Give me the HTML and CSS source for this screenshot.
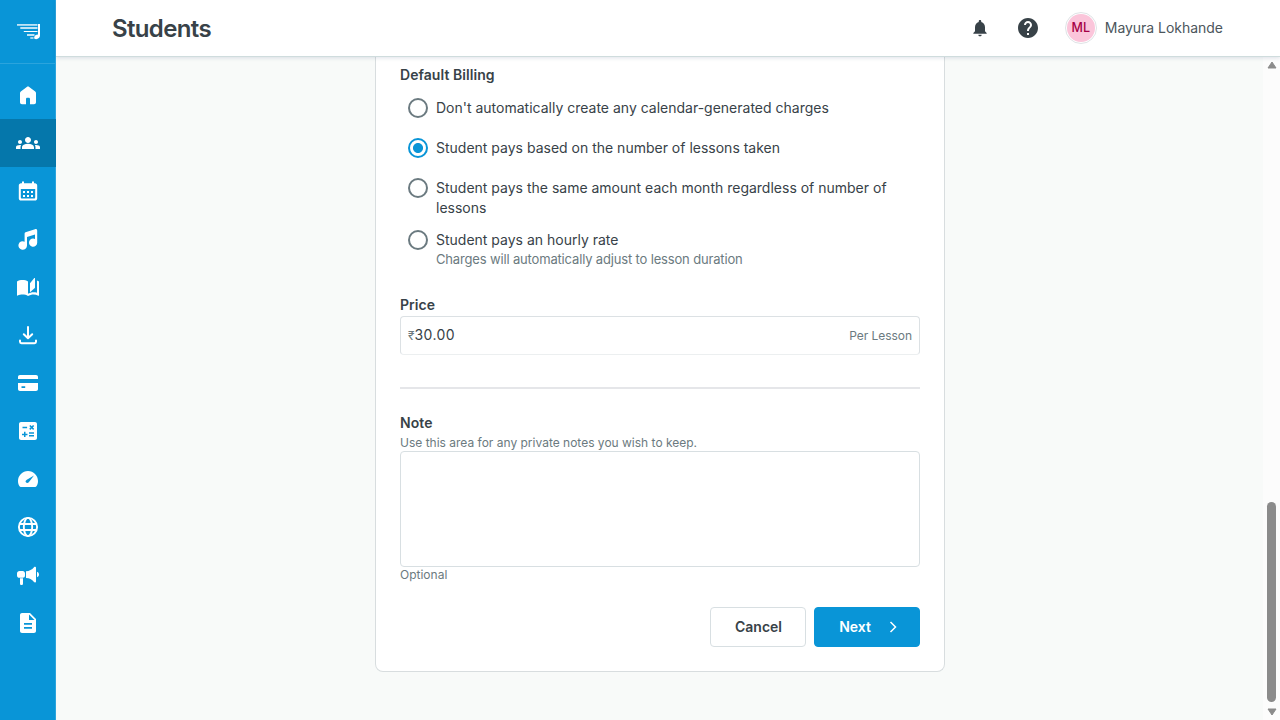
FILE: index.html
```html
<!DOCTYPE html>
<html lang="en">
<head>
<meta charset="utf-8">
<title>Students</title>
<link rel="stylesheet" href="styles.css">
</head>
<body>
<div class="app">
  <nav class="sidebar">
    <a class="logo" aria-label="Home page">
      <svg width="24" height="18" viewBox="0 0 24 18">
        <g fill="#bfe3f5"><rect x="0" y="1" width="20.500" height="1.800"/><rect x="3.300" y="4" width="17.200" height="2"/><rect x="6.800" y="8" width="13.700" height="1" fill="#fff"/><rect x="10" y="11" width="7.500" height="2"/><rect x="13.300" y="14.200" width="3.200" height="1.600"/></g>
        <path d="M21 1h2v11.600c0 2-1.700 3.600-3.800 3.600-1.600 0-2.300-.8-2-2 .3-1.400 1.700-2.400 3.800-2.600z" fill="#fff"/>
      </svg>
    </a>
    <div class="links">
      <a class="link"><svg class="icon" viewBox="0 0 24 24"><path d="M6 21.200c-1.200 0-2-.8-2-2V10.100c0-.7.3-1.200.8-1.600l6-4.600c.7-.6 1.700-.6 2.400 0l6 4.600c.5.400.8.900.8 1.600v9.100c0 1.200-.8 2-2 2h-4v-5c0-.9-.6-1.400-1.400-1.400h-1.200c-.8 0-1.400.5-1.400 1.400v5z"/></svg></a>
      <a class="link active"><svg class="icon" viewBox="0 0 24 24"><path d="M12 12.750c1.630 0 3.070.39 4.240.9 1.080.48 1.760 1.560 1.760 2.730V18H6v-1.610c0-1.180.68-2.260 1.760-2.730 1.170-.52 2.610-.91 4.240-.91zM4 13c1.100 0 2-.9 2-2s-.9-2-2-2-2 .9-2 2 .9 2 2 2zm1.130 1.100c-.37-.06-.74-.1-1.130-.1-.99 0-1.930.21-2.780.58C.48 14.900 0 15.620 0 16.430V18h4.500v-1.610c0-.83.23-1.610.63-2.290zM20 13c1.100 0 2-.9 2-2s-.9-2-2-2-2 .9-2 2 .9 2 2 2zm4 3.430c0-.81-.48-1.530-1.220-1.850-.85-.37-1.790-.58-2.780-.58-.39 0-.76.040-1.130.1.400.68.630 1.460.630 2.290V18H24zM12 6c1.660 0 3 1.340 3 3s-1.340 3-3 3-3-1.340-3-3 1.340-3 3-3z"/></svg></a>
      <a class="link"><svg class="icon" viewBox="0 0 24 24"><path fill-rule="evenodd" d="M6 2.500h2v1.700h8V2.500h2v1.700h1c1.200 0 2.200 1 2.200 2.200v13c0 1.200-1 2.200-2.200 2.200H5c-1.200 0-2.200-1-2.200-2.200v-13c0-1.200 1-2.200 2.200-2.200h1zM4.800 10v8.300c0 .8.400 1.200 1.200 1.200h12c.8 0 1.200-.4 1.200-1.200V10zM7 12h2v2H7zm4 0h2v2h-2zm4 0h2v2h-2zM7 16h2v2H7zm4 0h2v2h-2zm4 0h2v2h-2z"/></svg></a>
      <a class="link"><svg class="icon" viewBox="0 0 24 24"><path d="M9.500 5.200 19 2.200c1.300-.4 2.200.3 2.200 1.500v12a4.100 4.100 0 1 1-2.200-3.700V7.600L11 10v8.500a4.300 4.300 0 1 1-2.400-3.800V6.400c0-.6.300-1 .9-1.200z"/></svg></a>
      <a class="link"><svg class="icon" viewBox="0 0 24 24"><path d="m14 8.200 4.300-5.100c.3-.4.7-.2.700.2v8.900c0 .5-.2.800-.5 1.100L14 17.200zM6.500 5C4.500 5 2.500 5.400 1 6.500v13.700c0 .3.300.5.500.5C3 19.900 5 19.600 6.500 19.600c2 0 4 .4 5.500 1.500 1.400-.9 3.900-1.500 5.500-1.500 1.700 0 3.300.3 4.800 1.100.3.100.7-.1.700-.5V6.500c-.6-.5-1.200-.8-2-1v12.300c-1.100-.4-2.300-.5-3.500-.5-1.700 0-4.200.7-5.500 1.500V6.500C10.500 5.400 8.500 5 6.500 5z"/></svg></a>
      <a class="link"><svg class="icon stroke" viewBox="0 0 24 24"><path d="M12 4V14.500M7.800 11.200 12 15.200l4.200-4M4 17.500v1.300c0 1.100.8 1.400 1.500 1.400h13c.8 0 1.500-.3 1.500-1.400v-1.300"/></svg></a>
      <a class="link"><svg class="icon" viewBox="0 0 24 24"><path fill-rule="evenodd" d="M4 4h16c1.200 0 2 .8 2 2v2H2V6c0-1.200.8-2 2-2zM2 12h20v6c0 1.200-.8 2-2 2H4c-1.200 0-2-.8-2-2zm3.500 3.200v1.800h3.700v-1.800z"/></svg></a>
      <a class="link"><svg class="icon" viewBox="0 0 24 24"><path fill-rule="evenodd" d="M5 3h14c1.100 0 2 .9 2 2v14c0 1.100-.9 2-2 2H5c-1.100 0-2-.9-2-2V5c0-1.100.9-2 2-2zm1.500 4.700v1.500h4.600V7.700zm6.800-.8L14.700 8.400l-1.500 1.400 1.100 1.100 1.400-1.400 1.400 1.400 1.100-1.100-1.400-1.400 1.400-1.400-1.100-1.100-1.400 1.400-1.400-1.400zM13 13.300v1.500h5v-1.500zm0 2.700v1.500h5V16zm-5-3.200v1.900H6v1.500h2v1.900h1.500v-1.900h2v-1.500h-2v-1.900z"/></svg></a>
      <a class="link"><svg class="icon" viewBox="0 0 24 24"><path fill-rule="evenodd" d="M12 4c5.500 0 10 4.500 10 10 0 1.900-.5 3.600-1.400 5.100-.3.600-.8.900-1.500.9H4.900c-.7 0-1.200-.3-1.500-.9C2.500 17.600 2 15.900 2 14 2 8.500 6.500 4 12 4zm6 4.600-7.200 4.100c-1.300.8-1.500 1.800-.9 2.600.7.900 2 .9 2.900-.1z"/></svg></a>
      <a class="link"><svg class="icon outline" viewBox="0 0 24 24"><circle cx="12" cy="12" r="9.100"/><ellipse cx="12" cy="12" rx="4.200" ry="9.100"/><path d="M3.700 9h16.600M3.700 15h16.600"/></svg></a>
      <a class="link"><svg class="icon" viewBox="0 0 24 24"><path d="M3.500 8h3.200C8 8 9 9 9 10.500v2c0 1.300-.9 2.300-2.200 2.300H3.500c-1.500 0-2.500-.9-2.500-2.300v-2C1 9 2 8 3.500 8zM4 15.300h3v5.200c0 1-.6 1.600-1.500 1.600S4 21.500 4 20.500zM10 8.200c3.500-.2 5.900-1.500 8-4 .6-.7 2-.5 2 .6v13.600c0 1.100-1.400 1.400-2 .6-2.100-2.500-4.500-3.900-8-4zM21 8.700c1.300.5 2 1.500 2 2.800s-.7 2.300-2 2.800z"/></svg></a>
      <a class="link"><svg class="icon" viewBox="0 0 24 24"><path fill-rule="evenodd" d="M6 2h8l6 6v12c0 1.100-.9 2-2 2H6c-1.100 0-2-.9-2-2V4c0-1.100.9-2 2-2zm7 1.500V9h5.500zM8 12v1.700h8V12zm0 4v1.700h8V16z"/></svg></a>
    </div>
  </nav>
  <div class="page">
    <header class="header">
      <h1 class="title">Students</h1>
      <div class="tools">
        <svg class="bell" viewBox="0 0 24 24"><path d="M12 22c1.100 0 2-.9 2-2h-4c0 1.100.9 2 2 2zm6-6v-5c0-3.070-1.630-5.640-4.500-6.320V4c0-.83-.67-1.500-1.500-1.500s-1.500.67-1.500 1.500v.68C7.640 5.360 6 7.920 6 11v5l-2 2v1h16v-1z"/></svg>
        <svg class="help" viewBox="0 0 24 24"><path d="M12 2C6.480 2 2 6.480 2 12s4.480 10 10 10 10-4.480 10-10S17.520 2 12 2zm1 17h-2v-2h2zm2.070-7.750-.9.920C13.450 12.900 13 13.500 13 15h-2v-.5c0-1.100.45-2.100 1.170-2.830l1.240-1.260c.37-.36.59-.86.590-1.410 0-1.100-.9-2-2-2s-2 .9-2 2H8c0-2.210 1.790-4 4-4s4 1.790 4 4c0 .88-.36 1.680-.93 2.250z"/></svg>
        <div class="user"><span class="avatar">ML</span><span class="name">Mayura Lokhande</span></div>
      </div>
    </header>
    <div class="body">
      <main class="content">
        <form class="card">
          <div class="label">Default Billing</div>
          <div class="options">
            <label class="option"><span class="radio"></span><span>Don't automatically create any calendar-generated charges</span></label>
            <label class="option"><span class="radio checked"></span><span>Student pays based on the number of lessons taken</span></label>
            <label class="option multi"><span class="radio"></span><span>Student pays the same amount each month regardless of number of lessons</span></label>
            <label class="option"><span class="radio"></span><span>Student pays an hourly rate<small class="hint">Charges will automatically adjust to lesson duration</small></span></label>
          </div>
          <div class="label price-label">Price</div>
          <div class="price"><span class="currency">₹</span><span class="amount">30.00</span><span class="unit">Per Lesson</span></div>
          <hr class="rule">
          <div class="label">Note</div>
          <div class="help-text">Use this area for any private notes you wish to keep.</div>
          <div class="note"></div>
          <div class="help-text optional">Optional</div>
          <div class="actions">
            <button type="button" class="button">Cancel</button>
            <button type="button" class="button primary">Next<svg class="chevron" viewBox="0 0 8 12"><path d="m1.500 1 5 5-5 5"/></svg></button>
          </div>
        </form>
      </main>
      <div class="scrollbar">
        <svg width="10" height="8" viewBox="0 0 10 8"><path d="M5 1 9 7H1z"/></svg>
        <div class="thumb"></div>
        <svg width="10" height="8" viewBox="0 0 10 8"><path d="M5 7 9 1H1z"/></svg>
      </div>
    </div>
  </div>
</div>
</body>
</html>
```

FILE: styles.css
```css
* { box-sizing: border-box; }
body { margin: 0; font-family: Inter, "Liberation Sans", sans-serif; font-size: 14px; line-height: 20px; color: #384248; overflow: hidden; }
.app { display: flex; height: 720px; }
.sidebar { width: 56px; flex: none; background: #0995d7; border-right: 1px solid #2ba4dd; }
.logo { display: flex; height: 64px; padding: 23px 0 0 17px; border-bottom: 1px solid #2ba4dd; }
.links { padding-top: 7px; }
.link { display: flex; align-items: center; justify-content: center; height: 48px; width: 56px; }
.link.active { background: #0577ab; }
.icon { width: 24px; height: 24px; fill: #fff; }
.icon.stroke { fill: none; stroke: #fff; stroke-width: 2; stroke-linecap: round; stroke-linejoin: round; }
.icon.outline { fill: none; stroke: #fff; stroke-width: 1.900; }
.page { flex: 1; display: flex; flex-direction: column; min-width: 0; }
.header { position: relative; display: flex; align-items: center; justify-content: space-between; height: 57px; flex: none; padding: 0 57px 1px 56px; background: #fff; border-bottom: 1px solid #cfdcdd; box-shadow: 0 1px 4px rgba(40, 60, 110, .15); }
.title { margin: 0; padding-top: 2px; font-size: 24px; line-height: 32px; font-weight: 600; letter-spacing: -.64px; }
.tools { display: flex; align-items: center; }
.bell { width: 20px; height: 20px; margin-right: 26px; fill: #384248; }
.help { width: 24px; height: 24px; margin-right: 25px; fill: #384248; }
.user { display: flex; align-items: center; gap: 8px; }
.avatar { width: 32px; height: 32px; border: 1px solid #dfe3e6; border-radius: 50%; padding: 1px; background: #fbc5da content-box; color: #a50045; font-size: 12.5px; line-height: 28px; font-weight: 500; text-align: center; }
.name { letter-spacing: -.03px; color: #4c565c; }
.body { flex: 1; display: flex; min-height: 0; background: #f8faf9; }
.content { flex: 1; padding-left: 319px; }
.card { width: 570px; height: 615px; padding: 8px 24px 24px; background: #fff; border: 1px solid #d8dddf; border-top: 0; border-radius: 0 0 8px 8px; }
.label { font-weight: 600; letter-spacing: .06px; }
.options { display: flex; flex-direction: column; padding: 13px 0 0 8px; }
.option { display: flex; gap: 8px; min-height: 40px; }
.option.multi { min-height: 52px; }
.radio { width: 20px; height: 20px; flex: none; border: 2px solid #6b7a80; border-radius: 50%; }
.radio.checked { border-color: #0995d7; background: radial-gradient(circle, #0995d7 0 4.600px, #fff 5.400px); }
.hint { display: block; font-size: 13px; line-height: 18px; color: #6b7a80; letter-spacing: -.16px; }
.price-label { margin-top: 25px; }
.price { display: flex; align-items: center; height: 39px; margin-top: 1px; padding: 0 7px; border: 1px solid #dce1e4; border-bottom-color: #eceff0; border-radius: 4px; }
.currency { font-size: 12px; color: #6b7a80; }
.amount { flex: 1; padding-bottom: 1px; letter-spacing: .4px; }
.unit { padding-top: 1px; font-size: 12px; letter-spacing: -.04px; color: #6b7a80; }
.rule { height: 2px; margin: 32px 0 24px; border: 0; background: #e5e6e9; }
.help-text { padding-top: 1px; font-size: 12px; line-height: 17px; color: #6b7a80; }
.note { height: 116px; border: 1px solid #d8dfe2; border-radius: 4px; }
.optional { padding-top: 0; line-height: 16px; }
.actions { display: flex; justify-content: flex-end; gap: 8px; margin-top: 24px; }
.button { display: flex; align-items: center; justify-content: center; width: 96px; height: 40px; padding: 0 0 0 1px; border: 1px solid #d8dfe2; border-radius: 4px; background: #fff; color: #384248; font: 600 14px/20px Inter, sans-serif; }
.primary { width: 106px; gap: 18px; padding-left: 2px; background: #0995d7; border-color: #0995d7; color: #fff; }
.chevron { width: 8px; height: 12px; fill: none; stroke: #fff; stroke-width: 1.500; }
.scrollbar { width: 17px; flex: none; display: flex; flex-direction: column; align-items: center; justify-content: space-between; padding: 4px 0; background: #fcfcfc; fill: #8b8b8b; }
.scrollbar path { stroke: #8b8b8b; stroke-linejoin: round; }
.thumb { width: 9px; height: 200px; margin: auto 0 6px; border-radius: 5px; background: #8b8b8b; }
```
